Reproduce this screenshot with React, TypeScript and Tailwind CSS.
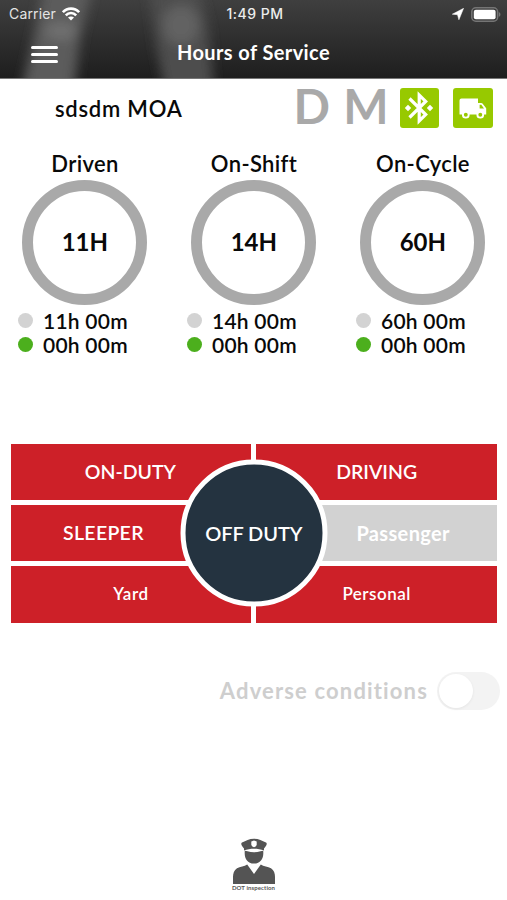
import type { ReactNode } from "react";
import clsx from "clsx";

interface GaugeProps {
    title: string;
    limit: string;
    remaining: string;
    used: string;
}

const gauges: GaugeProps[] = [
    { title: "Driven", limit: "11H", remaining: "11h 00m", used: "00h 00m" },
    { title: "On-Shift", limit: "14H", remaining: "14h 00m", used: "00h 00m" },
    { title: "On-Cycle", limit: "60H", remaining: "60h 00m", used: "00h 00m" },
];

const StatusBar = () => (
    <div className="flex h-7 items-center justify-between pl-[9px] pr-[6px] font-['Inter',sans-serif] text-[14px] leading-7">
        <div className="flex w-[120px] items-center gap-[6px]">
            <span className="tracking-[0.15px] text-[#e4e4e4]">Carrier</span>
            <svg width="18" height="14" viewBox="0 0 18 14" fill="none" stroke="white" strokeWidth="2.6">
                <path d="M0.9 5.2C5.3 0.4 12.7 0.4 17.1 5.2" />
                <path d="M3.8 8.3C6.7 5.3 11.3 5.3 14.2 8.3" />
                <path d="M9 13.6L6 10.6C7.6 9 10.4 9 12 10.6Z" fill="white" stroke="none" />
            </svg>
        </div>
        <span className="text-[14px] font-medium tracking-[0.5px] text-[#ececec]">1:49 PM</span>
        <div className="flex w-[120px] items-center justify-end gap-[7px]">
            <svg width="12" height="12" viewBox="0 0 12 12" fill="white">
                <path d="M11.6 0.3L0.3 6.2L5.5 6.7L6.9 11.8Z" stroke="white" strokeWidth="0.5" strokeLinejoin="round" />
            </svg>
            <svg width="30" height="15" viewBox="0 0 30 15">
                <rect x="0.8" y="0.8" width="25.8" height="13.4" rx="4" fill="#3a3a3a" stroke="#757575" strokeWidth="1.5" />
                <rect x="2.8" y="2.8" width="21.8" height="9.4" rx="2" fill="white" />
                <path d="M27.8 5C30 5.8 30 9 27.8 9.8Z" fill="#757575" />
            </svg>
        </div>
    </div>
);

// Out of focus road picture behind the title
const HeaderBackdrop = () => (
    <svg className="absolute inset-0" width="507" height="78" viewBox="0 0 507 78">
        <defs>
            <filter id="soft" x="-50%" y="-50%" width="200%" height="200%">
                <feGaussianBlur stdDeviation="6" />
            </filter>
            <linearGradient id="shade" x1="0" y1="0" x2="0" y2="1">
                <stop offset="0" stopColor="#3f3f3f" />
                <stop offset="1" stopColor="#1e1e1e" />
            </linearGradient>
        </defs>
        <rect width="507" height="78" fill="url(#shade)" />
        <g filter="url(#soft)">
            <path d="M45 -20H94L80 38L73 100H19L32 45Z" fill="#5c5c5c" />
            <path d="M148 -20H197L208 28L215 100H167L157 50Z" fill="#4e4e4e" />
            <ellipse cx="61" cy="31" rx="16" ry="9" fill="#707070" />
            <ellipse cx="181" cy="25" rx="18" ry="20" fill="#626262" />
        </g>
    </svg>
);

const Header = () => (
    <header className="relative h-[79px] border-b border-[#777] bg-[#2b2b2b] text-white">
        <HeaderBackdrop />
        <div className="relative">
            <StatusBar />
            <div className="grid h-12 grid-cols-[1fr_auto_1fr] items-center">
                <div className="flex flex-col gap-[3.2px] pl-[30.5px] pt-[5px]">
                    <span className="h-[3.7px] w-[27.5px] rounded-full bg-white" />
                    <span className="h-[3.7px] w-[27.5px] rounded-full bg-white" />
                    <span className="h-[3.7px] w-[27.5px] rounded-full bg-white" />
                </div>
                <h1 className="-mt-px text-[20px] font-bold tracking-[0.4px]">Hours of Service</h1>
            </div>
        </div>
    </header>
);

const StatusTile = ({ children }: { children: ReactNode }) => (
    <div className="flex size-[39.5px] items-center justify-center rounded-[3px] bg-[#97c900]">{children}</div>
);

const DriverRow = () => (
    <div className="flex h-[58px] items-center pr-[14.5px]">
        <p className="w-[240px] pl-[55px] text-[22px] font-semibold tracking-[0.75px]">sdsdm MOA</p>
        <div className="flex flex-1 items-center justify-end">
            <span className="-mt-[4px] mr-[13px] text-[48px] font-bold leading-none text-[#a9a9a9]">D</span>
            <span className="-mt-[4px] mr-[11px] text-[48px] font-bold leading-none text-[#a9a9a9]">M</span>
            <StatusTile>
                <svg width="30" height="34" viewBox="0 0 30 34" fill="none" stroke="white" strokeWidth="3.2">
                    <path d="M5.5 7.5L21.7 23.6L15.2 30V4L21.7 10.4L5.5 26.5" />
                    <path d="M4 13.8L7.2 17L4 20.2L0.8 17ZM26 13.8L29.2 17L26 20.2L22.8 17Z" fill="white" stroke="none" />
                </svg>
            </StatusTile>
            <div className="w-[14px]" />
            <StatusTile>
                <svg width="28" height="21" viewBox="0 0 28 21">
                    <path d="M2.5 0.5H19V5H22.3Q23 5 23.5 5.6L27.2 10.2V16.5H1Q0.5 16.5 0.5 16V2.5Q0.5 0.5 2.5 0.5Z" fill="white" />
                    <path d="M20.6 6.8H22.3L25 10.4H20.6Z" fill="#97c900" />
                    <circle cx="6.8" cy="16.7" r="2.9" fill="#97c900" stroke="white" strokeWidth="1.9" />
                    <circle cx="21.3" cy="16.7" r="2.9" fill="#97c900" stroke="white" strokeWidth="1.9" />
                </svg>
            </StatusTile>
        </div>
    </div>
);

const Gauge = ({ title, limit, remaining, used }: GaugeProps) => (
    <div className="flex flex-col items-center">
        <h2 className="mt-[10.5px] h-8 pl-px text-[22px] font-semibold leading-8 tracking-[0.35px]">{title}</h2>
        <div className="ml-[0.6px] flex size-[125px] items-center justify-center rounded-full border-[11px] border-[#a9a9a9] text-[24px] font-bold">
            {limit}
        </div>
        <div className="mt-[4px] w-[133px] text-[21px] font-semibold leading-6 tracking-[0.25px]">
            <p className="flex items-center gap-[10px]">
                <span className="size-[15px] rounded-full bg-[#d3d3d3]" />
                {remaining}
            </p>
            <p className="flex items-center gap-[10px]">
                <span className="size-[15px] rounded-full bg-[#4caf1d]" />
                {used}
            </p>
        </div>
    </div>
);

const DutyButton = ({ label, className }: { label: string; className?: string }) => (
    <button className={clsx("flex items-center justify-center text-white", className)}>{label}</button>
);

const DutySelector = () => (
    <section className="relative ml-[10.6px] mr-[10px] mt-[87.5px] grid h-[178.5px] grid-cols-2 grid-rows-3 gap-[5px]">
        <DutyButton label="ON-DUTY" className="bg-[#cd2028] pr-px text-[19.5px] font-semibold" />
        <DutyButton label="DRIVING" className="bg-[#cd2028] text-[19.5px] font-semibold" />
        <DutyButton label="SLEEPER" className="bg-[#cd2028] pb-px pr-[55px] text-[19.5px] font-semibold tracking-[0.3px]" />
        <DutyButton label="Passenger" className="bg-[#d2d2d2] pl-[53px] text-[20px] font-bold tracking-[0.35px]" />
        <DutyButton label="Yard" className="bg-[#cd2028] pb-px text-[17px] font-semibold tracking-[0.6px]" />
        <DutyButton label="Personal" className="bg-[#cd2028] pb-px text-[17px] font-semibold tracking-[0.5px]" />
        <button className="absolute left-1/2 top-1/2 size-[147px] -translate-x-1/2 -translate-y-1/2 rounded-full border-[5px] border-white bg-[#243340] pb-[2px] text-[20px] font-semibold tracking-[-0.1px] text-white">
            OFF DUTY
        </button>
    </section>
);

const AdverseConditions = () => (
    <div className="mt-[49px] flex h-[38px] items-center justify-end pr-[7px]">
        <span className="mr-[9px] text-[22px] font-bold tracking-[1.15px] text-[#cecece]">Adverse conditions</span>
        <div className="flex h-[38px] w-[63px] items-center rounded-full bg-[#f3f3f3] px-[2px]">
            <span className="size-[34px] rounded-full bg-white shadow-[0_1px_3px_#00000010]" />
        </div>
    </div>
);

const Inspection = () => (
    <footer className="mt-[128px] flex flex-col items-center">
        <svg width="44" height="47" viewBox="0 0 44 47" fill="#545454">
            <path d="M22 0.8C27 0.8 30 3 34 4.6C35.4 5.3 34.8 7.5 32 10.5V12.5C26 10.2 18 10.2 12 12.5V10.5C9.2 7.5 8.6 5.3 10 4.6C14 3 17 0.8 22 0.8Z" />
            <path d="M22 2.4L24.7 3.4V6.2C24.7 7.9 23.5 8.6 22 9.3C20.5 8.6 19.3 7.9 19.3 6.2V3.4Z" fill="white" />
            <path d="M12.8 12.8L15.5 13.2C19.5 14.6 24.5 14.6 28.5 13.2L31.2 12.8C32 19.5 29 25.6 22 25.6C15 25.6 12 19.5 12.8 12.8Z" />
            <path d="M15.2 26.4L22 36L28.8 26.4C31.5 28.4 36 28.4 39 30.2C42 32 43 35.5 43 39V46H1V39C1 35.5 2 32 5 30.2C8 28.4 12.5 28.4 15.2 26.4Z" />
        </svg>
        <span className="text-[6px] font-bold leading-[6px] tracking-[0.1px] text-[#555]">DOT inspection</span>
    </footer>
);

export default function App() {
    return (
        <main className="h-[900px] w-[507px] overflow-hidden bg-white font-['Lato',sans-serif] text-[#090909]">
            <Header />
            <DriverRow />
            <section className="grid grid-cols-3">
                {gauges.map((gauge) => (
                    <Gauge key={gauge.title} {...gauge} />
                ))}
            </section>
            <DutySelector />
            <AdverseConditions />
            <Inspection />
        </main>
    );
}
